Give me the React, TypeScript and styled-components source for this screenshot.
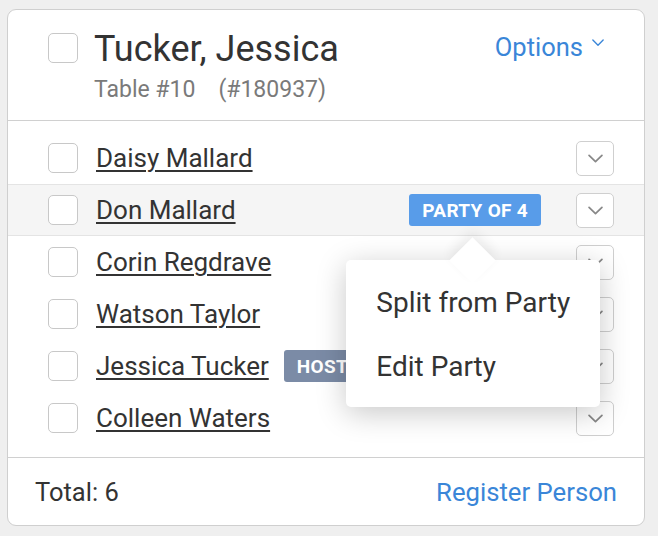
import React from 'react';
import styled, { createGlobalStyle } from 'styled-components';

const GlobalStyle = createGlobalStyle`
  html, body {
    margin: 0;
    padding: 0;
    background: #efefef;
    font-family: Roboto, 'Liberation Sans', sans-serif;
  }
`;

type Guest = {
  name: string;
  badge?: 'party' | 'host';
  highlighted?: boolean;
  menuOpen?: boolean;
};

const guests: Guest[] = [
  { name: 'Daisy Mallard' },
  { name: 'Don Mallard', badge: 'party', highlighted: true, menuOpen: true },
  { name: 'Corin Regdrave' },
  { name: 'Watson Taylor' },
  { name: 'Jessica Tucker', badge: 'host' },
  { name: 'Colleen Waters' },
];

const Chevron: React.FC<{ size?: number; color?: string }> = ({ size = 14, color = '#888' }) => (
  <svg width={size} height={size * 0.6} viewBox="0 0 14 8" fill="none">
    <path d="M1 1l6 6 6-6" stroke={color} strokeWidth="1.6" strokeLinecap="round" strokeLinejoin="round" />
  </svg>
);

const App: React.FC = () => {
  return (
    <Page>
      <GlobalStyle />
      <Card>
        <Header>
          <Checkbox />
          <HeaderText>
            <Title>Tucker, Jessica</Title>
            <Meta>
              Table #10<MetaGap />(#180937)
            </Meta>
          </HeaderText>
          <OptionsLink>
            Options
            <Chevron size={12} color="#3a86d8" />
          </OptionsLink>
        </Header>
        <List>
          {guests.map((g) => (
            <Row key={g.name} $highlighted={g.highlighted}>
              <Checkbox />
              <Name>{g.name}</Name>
              {g.badge === 'host' && <Badge $kind="host">HOST</Badge>}
              <Spacer />
              {g.badge === 'party' && (
                <BadgeAnchor>
                  <Badge $kind="party">PARTY OF 4</Badge>
                  {g.menuOpen && (
                    <Popover>
                      <MenuItem>Split from Party</MenuItem>
                      <MenuItem>Edit Party</MenuItem>
                    </Popover>
                  )}
                </BadgeAnchor>
              )}
              <DropButton>
                <Chevron size={15} />
              </DropButton>
            </Row>
          ))}
        </List>
        <Footer>
          <Total>Total: 6</Total>
          <RegisterLink>Register Person</RegisterLink>
        </Footer>
      </Card>
    </Page>
  );
};

export default App;

const Page = styled.div`
  width: 658px;
  height: 536px;
  padding: 9px 0 0 7px;
  box-sizing: border-box;
`;

const Card = styled.div`
  width: 638px;
  height: 517px;
  box-sizing: border-box;
  background: #fff;
  border: 1.5px solid #cfcfcf;
  border-radius: 9px;
  display: flex;
  flex-direction: column;
`;

const Header = styled.div`
  display: flex;
  align-items: flex-start;
  padding: 21px 38px 0 40px;
  height: 111px;
  box-sizing: border-box;
  border-bottom: 1.5px solid #d0d0d0;
`;

const Checkbox = styled.span`
  flex: none;
  width: 30px;
  height: 30px;
  box-sizing: border-box;
  border: 1.5px solid #c8c8c8;
  border-radius: 5px;
  background: #fff;
  margin-top: 2px;
`;

const HeaderText = styled.div`
  display: flex;
  flex-direction: column;
  margin-left: 16px;
  flex: 1;
`;

const Title = styled.div`
  font-size: 36px;
  line-height: 36px;
  color: #333;
`;

const Meta = styled.div`
  margin-top: 9px;
  font-size: 23px;
  color: #7a7a7a;
`;

const MetaGap = styled.span`
  display: inline-block;
  width: 23px;
`;

const OptionsLink = styled.div`
  display: flex;
  align-items: center;
  gap: 9px;
  margin-top: 1px;
  margin-right: 2px;
  font-size: 25.5px;
  color: #3a86d8;
  svg {
    margin-top: -9px;
  }
`;

const List = styled.div`
  padding: 11px 0 13px;
  border-bottom: 1.5px solid #d0d0d0;
`;

const Row = styled.div<{ $highlighted?: boolean }>`
  display: flex;
  align-items: center;
  height: 52px;
  box-sizing: border-box;
  padding: 0 30px 0 40px;
  background: ${({ $highlighted }) => ($highlighted ? '#f5f5f5' : 'transparent')};
  border-top: 1px solid ${({ $highlighted }) => ($highlighted ? '#e4e4e4' : 'transparent')};
  border-bottom: 1px solid ${({ $highlighted }) => ($highlighted ? '#e4e4e4' : 'transparent')};
  ${Checkbox} {
    margin-top: 0;
  }
`;

const Name = styled.span`
  margin-left: 18px;
  font-size: 26px;
  color: #333;
  text-decoration: underline;
  text-decoration-thickness: 1.5px;
  text-underline-offset: 3px;
`;

const Spacer = styled.span`
  flex: 1;
`;

const BadgeAnchor = styled.div`
  position: relative;
  margin-right: 35px;
`;

const Badge = styled.span<{ $kind: 'party' | 'host' }>`
  display: inline-flex;
  align-items: center;
  height: 32px;
  padding: 0 13px;
  border-radius: 3px;
  box-sizing: border-box;
  font-size: 19px;
  font-weight: 700;
  letter-spacing: 0.3px;
  color: #fff;
  background: ${({ $kind }) => ($kind === 'party' ? '#589ce9' : '#7b8ba6')};
  margin-left: ${({ $kind }) => ($kind === 'host' ? '15px' : '0')};
`;

const DropButton = styled.div`
  flex: none;
  width: 38px;
  height: 35px;
  box-sizing: border-box;
  border: 1.5px solid #cfcfcf;
  border-radius: 5px;
  background: #fff;
  display: flex;
  align-items: center;
  justify-content: center;
`;

const Popover = styled.div`
  position: absolute;
  top: 66px;
  left: -63px;
  width: 254px;
  padding: 10px 0 9px;
  background: #fff;
  border-radius: 5px;
  box-shadow: 0 6px 30px rgba(0, 0, 0, 0.22);
  z-index: 2;
  &::before {
    content: '';
    position: absolute;
    top: -16px;
    left: 110px;
    width: 33px;
    height: 33px;
    background: #fff;
    transform: rotate(45deg);
    box-shadow: -5px -5px 12px rgba(0, 0, 0, 0.07);
  }
`;

const MenuItem = styled.div`
  position: relative;
  padding: 0 30px;
  height: 64px;
  display: flex;
  align-items: center;
  font-size: 28px;
  color: #333;
`;

const Footer = styled.div`
  flex: 1;
  display: flex;
  align-items: center;
  justify-content: space-between;
  padding: 0 27px;
`;

const Total = styled.span`
  font-size: 25.5px;
  color: #333;
`;

const RegisterLink = styled.span`
  font-size: 25.7px;
  color: #3a86d8;
`;
